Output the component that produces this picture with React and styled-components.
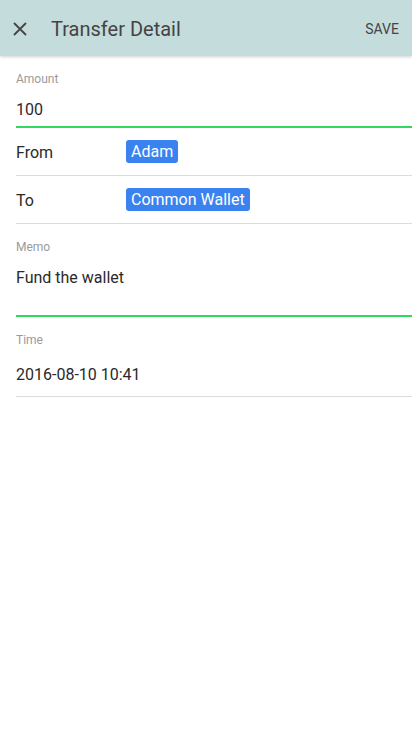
import React from 'react'
import styled, { createGlobalStyle } from 'styled-components';

const GlobalStyle = createGlobalStyle`
    body {
        margin: 0;
        background: #fff;
        font-family: Roboto, 'Liberation Sans', sans-serif;
    }
`

const Colours = {
    header: '#c4dcdc',
    accent: '#33d65f',
    chip: '#3b82f1',
    divider: '#dcdcdc',
    label: '#9a9a9a',
    text: '#2a2a2a',
}

function CloseIcon() {
    return (
        <svg width="14" height="14" viewBox="0 0 14 14">
            <path d="M1 1 L13 13 M13 1 L1 13" stroke="#444" strokeWidth="1.8" fill="none" />
        </svg>
    )
}

export default function App() {
    return (
        <Page>
            <GlobalStyle />
            <Header>
                <CloseButton><CloseIcon /></CloseButton>
                <Title>Transfer Detail</Title>
                <Save>SAVE</Save>
            </Header>
            <Form>
                <Field active top={15} bottom={6}>
                    <Label>Amount</Label>
                    <Value top={13}>100</Value>
                </Field>
                <Row>
                    <RowLabel>From</RowLabel>
                    <Chip>Adam</Chip>
                </Row>
                <Row>
                    <RowLabel>To</RowLabel>
                    <Chip>Common Wallet</Chip>
                </Row>
                <Field active top={15} bottom={27}>
                    <Label>Memo</Label>
                    <Value top={13}>Fund the wallet</Value>
                </Field>
                <Field top={15} bottom={11}>
                    <Label>Time</Label>
                    <Value top={17}>2016-08-10 10:41</Value>
                </Field>
            </Form>
        </Page>
    )
}

const Page = styled.div`
    width: 412px;
    min-height: 741px;
    background: #fff;
`

const Header = styled.header`
    height: 56px;
    display: flex;
    align-items: center;
    background-color: ${Colours.header};
    box-shadow: 0 1px 3px rgba(0,0,0,0.18);
    position: relative;
`

const CloseButton = styled.div`
    width: 14px;
    height: 14px;
    margin-left: 13px;
    margin-top: 1px;
    display: flex;
`

const Title = styled.div`
    margin-left: 24px;
    margin-top: 2px;
    font-size: 20px;
    color: #444;
    flex: 1;
`

const Save = styled.div`
    font-size: 14px;
    color: #444;
    margin-right: 13px;
    margin-top: 1px;
`

const Form = styled.div`
    padding-left: 16px;
`

const Field = styled.div`
    padding-top: ${p => p.top}px;
    padding-bottom: ${p => p.bottom}px;
    border-bottom: ${p => p.active ? `2px solid ${Colours.accent}` : `1px solid ${Colours.divider}`};
`

const Label = styled.div`
    font-size: 12px;
    line-height: 16px;
    color: ${Colours.label};
`

const Value = styled.div`
    margin-top: ${p => p.top}px;
    font-size: 16px;
    line-height: 20px;
    color: ${Colours.text};
`

const Row = styled.div`
    height: 47px;
    display: flex;
    align-items: center;
    border-bottom: 1px solid ${Colours.divider};
`

const RowLabel = styled.div`
    width: 110px;
    font-size: 16px;
    color: ${Colours.text};
    margin-top: 2px;
`

const Chip = styled.span`
    background-color: ${Colours.chip};
    color: #fff;
    font-size: 16px;
    line-height: 23px;
    padding: 0 5px;
    border-radius: 3px;
`
